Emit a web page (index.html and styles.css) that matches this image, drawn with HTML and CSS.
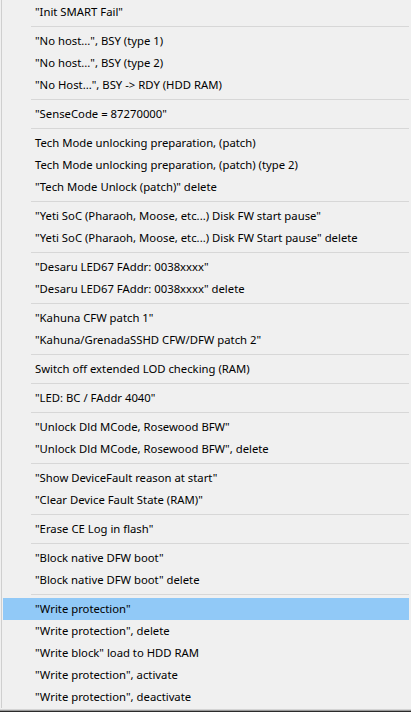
FILE: index.html
```html
<!DOCTYPE html>
<html>
<head>
<meta charset="utf-8">
<link rel="stylesheet" href="styles.css">
</head>
<body>
<div class="menu">
  <div class="item">"Init SMART Fail"</div>
  <div class="sep"></div>
  <div class="item">"No host...", BSY (type 1)</div>
  <div class="item">"No host...", BSY (type 2)</div>
  <div class="item">"No Host...", BSY -&gt; RDY (HDD RAM)</div>
  <div class="sep"></div>
  <div class="item">"SenseCode = 87270000"</div>
  <div class="sep"></div>
  <div class="item">Tech Mode unlocking preparation, (patch)</div>
  <div class="item">Tech Mode unlocking preparation, (patch) (type 2)</div>
  <div class="item">"Tech Mode Unlock (patch)" delete</div>
  <div class="sep"></div>
  <div class="item">"Yeti SoC (Pharaoh, Moose, etc...) Disk FW start pause"</div>
  <div class="item">"Yeti SoC (Pharaoh, Moose, etc...) Disk FW Start pause" delete</div>
  <div class="sep"></div>
  <div class="item">"Desaru LED67 FAddr: 0038xxxx"</div>
  <div class="item">"Desaru LED67 FAddr: 0038xxxx" delete</div>
  <div class="sep"></div>
  <div class="item">"Kahuna CFW patch 1"</div>
  <div class="item">"Kahuna/GrenadaSSHD CFW/DFW patch 2"</div>
  <div class="sep"></div>
  <div class="item">Switch off extended LOD checking (RAM)</div>
  <div class="sep"></div>
  <div class="item">"LED: BC / FAddr 4040"</div>
  <div class="sep"></div>
  <div class="item">"Unlock Dld MCode, Rosewood BFW"</div>
  <div class="item">"Unlock Dld MCode, Rosewood BFW", delete</div>
  <div class="sep"></div>
  <div class="item">"Show DeviceFault reason at start"</div>
  <div class="item">"Clear Device Fault State (RAM)"</div>
  <div class="sep"></div>
  <div class="item">"Erase CE Log in flash"</div>
  <div class="sep"></div>
  <div class="item">"Block native DFW boot"</div>
  <div class="item">"Block native DFW boot" delete</div>
  <div class="sep"></div>
  <div class="item active">"Write protection"</div>
  <div class="item">"Write protection", delete</div>
  <div class="item">"Write block" load to HDD RAM</div>
  <div class="item">"Write protection", activate</div>
  <div class="item">"Write protection", deactivate</div>
</div>
<div class="bottom"></div>
</body>
</html>
```

FILE: styles.css
```css
html, body {
  margin: 0;
  padding: 0;
  background: #f0f0f0;
  overflow: hidden;
}
body {
  width: 411px;
  height: 712px;
  display: flex;
  flex-direction: column;
  font-family: "Noto Sans", "Open Sans", sans-serif;
  font-size: 11.3px;
  color: #000;
}
.menu {
  flex: 1;
  margin-left: 1px;
  border-left: 1px solid #cfcfcf;
  padding: 1px 2px 0 1px;
}
.item {
  height: 22px;
  line-height: 22px;
  padding-left: 32px;
  white-space: nowrap;
}
.item.active {
  background: #91c9f7;
}
.sep {
  height: 1px;
  margin: 3px 0 3px 28px;
  background: #d7d7d7;
}
.bottom {
  height: 4px;
  background: linear-gradient(#f0f0f0 0 1px, #d4d4d4 1px 2px, #9a9a9a 2px 3px, #2b2b2b 3px 4px);
}
```
